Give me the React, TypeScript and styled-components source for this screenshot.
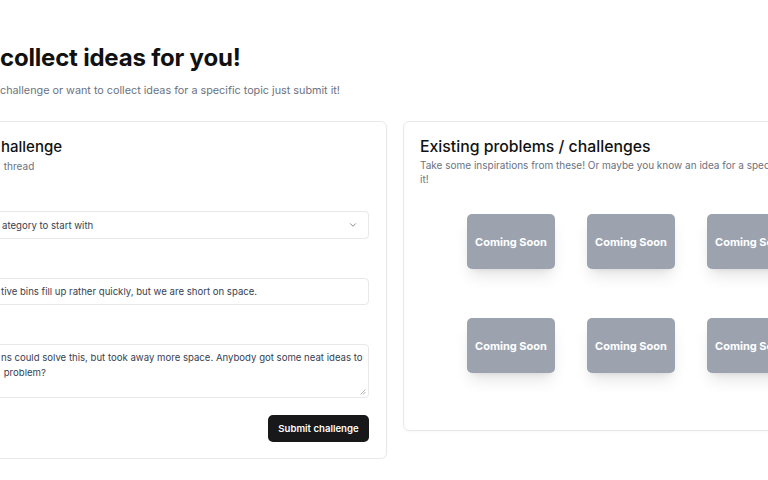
import styled, { createGlobalStyle } from "styled-components";

const GlobalStyle = createGlobalStyle`
  html, body {
    margin: 0;
    padding: 0;
    background: #ffffff;
    overflow: hidden;
  }
  body {
    font-family: Inter, "Noto Sans", "Liberation Sans", sans-serif;
    color: #111827;
  }
  * {
    box-sizing: border-box;
  }
`;

const tiles = Array.from({ length: 6 }, (_, i) => i);

const App: React.FC = () => {
  return (
    <>
      <GlobalStyle />
      <StyledPage>
        <StyledHeading>collect ideas for you!</StyledHeading>
        <StyledLead>
          challenge or want to collect ideas for a specific topic just submit it!
        </StyledLead>

        <StyledColumns>
          <StyledFormCard>
            <StyledCardHead>
              <StyledCardTitle>hallenge</StyledCardTitle>
              <StyledCardSub>&nbsp;thread</StyledCardSub>
            </StyledCardHead>

            <StyledField>
              <StyledSelect>
                <span>ategory to start with</span>
                <Chevron />
              </StyledSelect>
            </StyledField>

            <StyledField>
              <StyledInput>
                tive bins fill up rather quickly, but we are short on space.
              </StyledInput>
            </StyledField>

            <StyledField>
              <StyledTextarea>
                ns could solve this, but took away more space. Anybody got some neat ideas to
                <br />
                &nbsp;problem?
                <Grip />
              </StyledTextarea>
            </StyledField>

            <StyledActions>
              <StyledButton>Submit challenge</StyledButton>
            </StyledActions>
          </StyledFormCard>

          <StyledListCard>
            <StyledListTitle>Existing problems / challenges</StyledListTitle>
            <StyledListSub>
              Take some inspirations from these! Or maybe you know an idea for a
              specific problem? Just add
              <br />
              it!
            </StyledListSub>
            <StyledGrid>
              {tiles.map((t) => (
                <StyledTile key={t}>Coming Soon</StyledTile>
              ))}
            </StyledGrid>
          </StyledListCard>
        </StyledColumns>
      </StyledPage>
    </>
  );
};

export default App;

const Chevron = () => (
  <svg width="10" height="10" viewBox="0 0 24 24" fill="none" stroke="#6b7280" strokeWidth="2" strokeLinecap="round" strokeLinejoin="round">
    <path d="m6 9 6 6 6-6" />
  </svg>
);

const Grip = () => (
  <StyledGrip width="6" height="6" viewBox="0 0 6 6">
    <path d="M5.5 0.5 L0.5 5.5 M5.5 3 L3 5.5" stroke="#9ca3af" strokeWidth="0.8" />
  </StyledGrip>
);

const StyledPage = styled.div`
  width: 900px;
  padding-top: 42px;
`;

const StyledHeading = styled.h1`
  margin: 0;
  font-size: 24px;
  line-height: 32px;
  font-weight: 700;
  letter-spacing: -0.2px;
  color: #111111;
`;

const StyledLead = styled.p`
  margin: 8px 0 0;
  font-size: 10.8px;
  line-height: 18px;
  color: #6b7280;
`;

const StyledColumns = styled.div`
  display: flex;
  align-items: flex-start;
  gap: 16px;
  margin-top: 21px;
  margin-left: -30px;
`;

const StyledFormCard = styled.section`
  width: 417px;
  padding: 14px 17px 16px 18px;
  border: 1px solid #e8e8ea;
  border-radius: 6px;
  box-shadow: 0 1px 2px rgba(0, 0, 0, 0.03);
`;

const StyledCardHead = styled.div`
  padding-left: 12px;
  margin-bottom: 37px;
`;

const StyledCardTitle = styled.h2`
  margin: 0;
  font-size: 15px;
  line-height: 22px;
  font-weight: 500;
  color: #111111;
`;

const StyledCardSub = styled.div`
  font-size: 10px;
  line-height: 16px;
  color: #6b7280;
`;

const StyledField = styled.div`
  & + & {
    margin-top: 39px;
  }
`;

const StyledBox = styled.div`
  border: 1px solid #e8e8ea;
  border-radius: 4px;
  padding: 0 11px;
  font-size: 9.6px;
  color: #374151;
  background: #ffffff;
`;

const StyledSelect = styled(StyledBox)`
  height: 28px;
  display: flex;
  align-items: center;
  justify-content: space-between;
  padding-left: 12px;
  padding-right: 10px;
`;

const StyledInput = styled(StyledBox)`
  height: 27px;
  display: flex;
  align-items: center;
`;

const StyledTextarea = styled(StyledBox)`
  position: relative;
  height: 54px;
  padding-top: 5px;
  line-height: 15px;
  white-space: nowrap;
`;

const StyledGrip = styled.svg`
  position: absolute;
  right: 2px;
  bottom: 2px;
`;

const StyledActions = styled.div`
  display: flex;
  justify-content: flex-end;
  margin-top: 17px;
`;

const StyledButton = styled.button`
  height: 27px;
  width: 101px;
  border: none;
  border-radius: 5px;
  background: #18181b;
  color: #ffffff;
  font-family: inherit;
  font-size: 9.6px;
  font-weight: 600;
  cursor: pointer;
`;

const StyledListCard = styled.section`
  width: 440px;
  padding: 14px 16px 17px 16px;
  border: 1px solid #e8e8ea;
  border-radius: 6px;
  box-shadow: 0 1px 2px rgba(0, 0, 0, 0.03);
`;

const StyledListTitle = styled.h2`
  margin: 0;
  font-size: 15.8px;
  line-height: 22px;
  font-weight: 500;
  color: #111111;
`;

const StyledListSub = styled.p`
  margin: 0;
  white-space: nowrap;
  font-size: 10px;
  line-height: 14px;
  color: #6b7280;
`;

const StyledGrid = styled.div`
  display: grid;
  grid-template-columns: repeat(3, 88px);
  column-gap: 32px;
  row-gap: 49px;
  padding: 28px 0 40px 47px;
`;

const StyledTile = styled.div`
  height: 55px;
  display: flex;
  align-items: center;
  justify-content: center;
  border-radius: 5px;
  background: #9ca3af;
  color: #ffffff;
  font-size: 11px;
  font-weight: 700;
  box-shadow: 0 10px 15px -3px rgba(0, 0, 0, 0.1),
    0 4px 6px -4px rgba(0, 0, 0, 0.1);
`;
